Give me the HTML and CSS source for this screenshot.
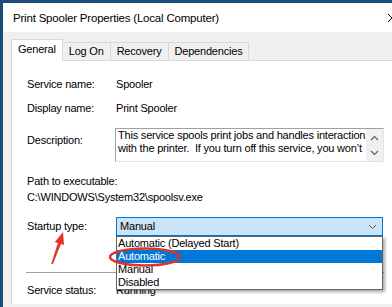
FILE: index.html
```html
<!DOCTYPE html>
<html>
  <head>
    <title>Print Spooler Properties (Local Computer)</title>
    <meta charset="UTF-8" />
    <link rel="stylesheet" href="styles.css">
  </head>
  <body>
    <div class="window">
      <div class="titlebar">
        <span>Print Spooler Properties (Local Computer)</span>
        <svg class="close" width="10" height="10" viewBox="0 0 10 10">
          <path d="M1 1 L9 9 M9 1 L1 9" stroke="#000" stroke-width="1" fill="none" />
        </svg>
      </div>

      <div class="tabs">
        <div class="tab active">General</div>
        <div class="tab">Log On</div>
        <div class="tab">Recovery</div>
        <div class="tab">Dependencies</div>
      </div>

      <div class="panel">
        <div class="row row-name">
          <span class="label">Service name:</span>
          <span>Spooler</span>
        </div>
        <div class="row row-display">
          <span class="label">Display name:</span>
          <span>Print Spooler</span>
        </div>
        <div class="row row-desc">
          <span class="label">Description:</span>
          <div class="desc-box">
            <div class="desc-text">
              <div>This service spools print jobs and handles interaction</div>
              <div>with the printer.&nbsp; If you turn off this service, you won’t</div>
            </div>
            <div class="scroll">
              <svg width="9" height="6" viewBox="0 0 9 6"><path d="M1 5 L4.5 1.5 L8 5" stroke="#606060" stroke-width="1.2" fill="none" /></svg>
              <svg width="9" height="6" viewBox="0 0 9 6"><path d="M1 1 L4.5 4.5 L8 1" stroke="#606060" stroke-width="1.2" fill="none" /></svg>
            </div>
          </div>
        </div>
        <div class="path-label">Path to executable:</div>
        <div class="path-value">C:\WINDOWS\System32\spoolsv.exe</div>
        <div class="row row-startup">
          <span class="label">Startup type:</span>
          <div class="combo">
            <div class="combo-field">
              <span>Manual</span>
              <svg width="9" height="6" viewBox="0 0 9 6"><path d="M1 1 L4.5 4.5 L8 1" stroke="#505050" stroke-width="1" fill="none" /></svg>
            </div>
            <ul class="combo-list">
              <li>Automatic (Delayed Start)</li>
              <li class="selected">Automatic</li>
              <li>Manual</li>
              <li>Disabled</li>
            </ul>
          </div>
        </div>
        <div class="separator"></div>
        <div class="row row-status">
          <span class="label">Service status:</span>
          <span>Running</span>
        </div>
      </div>
    </div>

    <!-- marcas rojas encima de la captura -->
    <svg class="mark-arrow" width="25" height="40" viewBox="0 0 25 40">
      <polygon points="18,4 19,17 16,16 7.8,36.3 6.2,35.9 12.8,15 9.8,14" fill="#e8352c" />
    </svg>
    <svg class="mark-ring" width="76" height="22" viewBox="0 0 76 22">
      <ellipse cx="38" cy="11" rx="35" ry="8.5" stroke="#e0312b" stroke-width="2.5" fill="none" />
    </svg>
  </body>
</html>
```

FILE: styles.css
```css
body {
  margin: 0;
  width: 392px;
  height: 307px;
  overflow: hidden;
  position: relative;
  background-color: #1c4a7a;
  font-family: "Liberation Sans", Arial, sans-serif;
  font-size: 11px;
  letter-spacing: -0.2px;
  color: #000;
}

.window {
  margin-top: 3px;
  margin-left: 3px;
  height: 304px;
  background-color: #f0f0f0;
}

.titlebar {
  height: 29px;
  background-color: #fff;
  display: flex;
  align-items: center;
  justify-content: space-between;
  padding-left: 10px;
  font-size: 11.5px;
}

.titlebar .close {
  margin-right: -5px;
}

.tabs {
  display: flex;
  align-items: flex-end;
  height: 21px;
  margin-top: 7px;
  padding-left: 8px;
}

.tab {
  box-sizing: border-box;
  height: 18px;
  line-height: 17px;
  padding: 0 6px;
  border: 1px solid #d9d9d9;
  border-bottom: none;
  border-left: none;
}

.tab:first-child {
  border-left: 1px solid #d9d9d9;
}

.tab.active {
  height: 22px;
  line-height: 19px;
  margin-bottom: -1px;
  background-color: #fff;
  position: relative;
  z-index: 1;
}

.panel {
  box-sizing: border-box;
  height: 244px;
  margin-left: 8px;
  padding: 16px 8px 0 15px;
  background-color: #fff;
  border-top: 1px solid #d9d9d9;
  border-left: 1px solid #d9d9d9;
}

.row {
  display: grid;
  grid-template-columns: 89px minmax(0, 1fr);
  align-items: center;
  line-height: 15px;
}

.row-display {
  margin-top: 9px;
}

.row-desc {
  margin-top: 12px;
  align-items: start;
}

.row-desc .label {
  margin-top: 5px;
}

.desc-box {
  box-sizing: border-box;
  height: 34px;
  margin-left: -1px;
  display: flex;
  border: 1px solid #a0a0a0;
  border-right-color: #e3e3e3;
  border-bottom-color: #e3e3e3;
}

.desc-text {
  flex: 1;
  min-width: 0;
  overflow: hidden;
  white-space: nowrap;
  line-height: 13px;
  padding-left: 2px;
}

.scroll {
  width: 17px;
  background-color: #f0f0f0;
  display: flex;
  flex-direction: column;
  align-items: center;
  justify-content: space-between;
  padding: 6px 0 5px;
}

.path-label {
  margin-top: 12px;
  line-height: 15px;
}

.path-value {
  margin-top: 1px;
  line-height: 15px;
}

.row-startup {
  margin-top: 12px;
}

.combo {
  position: relative;
  margin-right: 1px;
}

.combo-field {
  box-sizing: border-box;
  height: 19px;
  display: flex;
  align-items: center;
  justify-content: space-between;
  padding: 0 5px 0 3px;
  background-color: #cce4f7;
  border: 1px solid #0078d7;
}

.combo-list {
  position: absolute;
  top: 100%;
  left: 0;
  right: 0;
  z-index: 2;
  margin: 0;
  padding: 0;
  list-style: none;
  background-color: #fff;
  border: 1px solid #646464;
  box-shadow: 2px 2px 3px rgba(0, 0, 0, 0.35);
}

.combo-list li {
  height: 13px;
  line-height: 13px;
  padding-left: 1px;
}

.combo-list li.selected {
  background-color: #0078d7;
  color: #fff;
}

.separator {
  margin-top: 36px;
  border-top: 1px solid #a0a0a0;
  margin-left: -1px;
}

.row-status {
  margin-top: 10px;
}

.mark-arrow {
  position: absolute;
  left: 45px;
  top: 228px;
}

.mark-ring {
  position: absolute;
  left: 107px;
  top: 246px;
  z-index: 3;
}
```
